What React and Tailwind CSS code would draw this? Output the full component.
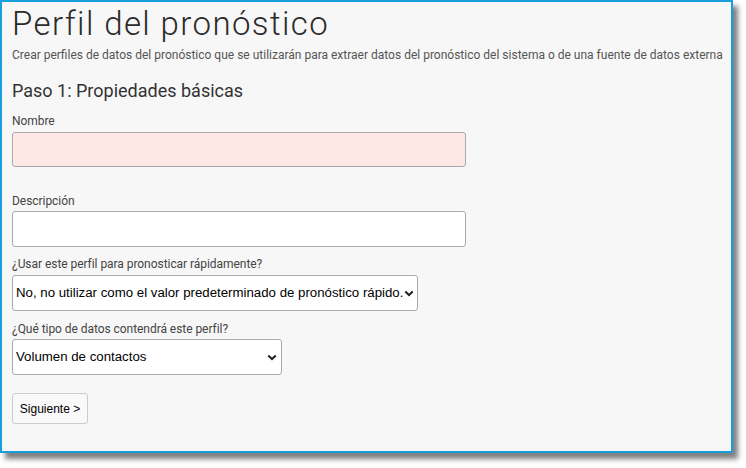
import { useState } from "react";

const Chevron = () => (
  <svg width="10" height="7" viewBox="0 0 10 7" className="shrink-0">
    <path d="M1.3 1.5 L5 5 L8.7 1.5" fill="none" stroke="#222" strokeWidth="2" />
  </svg>
);

const Field = ({ label, children, className }) => (
  <div className={className}>
    <div className="text-[12px] leading-[14px] tracking-[-0.05px] text-[#444] whitespace-nowrap">{label}</div>
    {children}
  </div>
);

const App = () => {
  const [nombre, setNombre] = useState("");
  const [descripcion, setDescripcion] = useState("");

  return (
    <div className="w-[746px] h-[468px] bg-white font-['Roboto',sans-serif]">
      <div className="w-[733px] h-[453px] border-2 border-[#169fdb] bg-[#f7f7f7] shadow-[5px_6px_5px_rgba(0,0,0,0.5)] pl-[10px] pt-[3px]">
        <h1 className="text-[33px] leading-[38px] tracking-[1.4px] font-light text-[#2b2b2b] whitespace-nowrap">Perfil del pronóstico</h1>
        <p className="mt-[4px] text-[12px] leading-[16px] text-[#555] whitespace-nowrap">
          Crear perfiles de datos del pronóstico que se utilizarán para extraer datos del pronóstico del sistema o de una fuente de datos externa
        </p>
        <h2 className="mt-[17px] text-[18px] leading-[22px] text-[#333]">Paso 1: Propiedades básicas</h2>

        <Field label="Nombre" className="mt-[12px]">
          <input
            value={nombre}
            onChange={(e) => setNombre(e.target.value)}
            className="mt-[4px] block w-[454px] h-[35px] rounded-[3px] border border-[#aaa] bg-[#fde8e6] outline-none"
          />
        </Field>

        <Field label="Descripción" className="mt-[27px]">
          <input
            value={descripcion}
            onChange={(e) => setDescripcion(e.target.value)}
            className="mt-[3px] block w-[454px] h-[36px] rounded-[3px] border border-[#aaa] bg-white outline-none"
          />
        </Field>

        <Field label="¿Usar este perfil para pronosticar rápidamente?" className="mt-[10px]">
          <div className="mt-[4px] flex items-center justify-between w-[406px] h-[36px] rounded-[3px] border border-[#aaa] bg-white pl-[3px] pr-[3px] font-['Liberation_Sans',sans-serif] text-[13.25px] text-black whitespace-nowrap">
            <span>No, no utilizar como el valor predeterminado de pronóstico rápido.</span>
            <Chevron />
          </div>
        </Field>

        <Field label="¿Qué tipo de datos contendrá este perfil?" className="mt-[11px]">
          <div className="mt-[3px] flex items-center justify-between w-[270px] h-[36px] rounded-[3px] border border-[#aaa] bg-white pl-[3px] pr-[4px] font-['Liberation_Sans',sans-serif] text-[13.25px] text-black">
            <span>Volumen de contactos</span>
            <Chevron />
          </div>
        </Field>

        <button className="mt-[18px] block h-[31px] w-[76px] rounded-[3px] border border-[#ccc] bg-[#f9f9f9] font-['Liberation_Sans',sans-serif] text-[12px] text-black">
          Siguiente &gt;
        </button>
      </div>
    </div>
  );
};

export default App;
